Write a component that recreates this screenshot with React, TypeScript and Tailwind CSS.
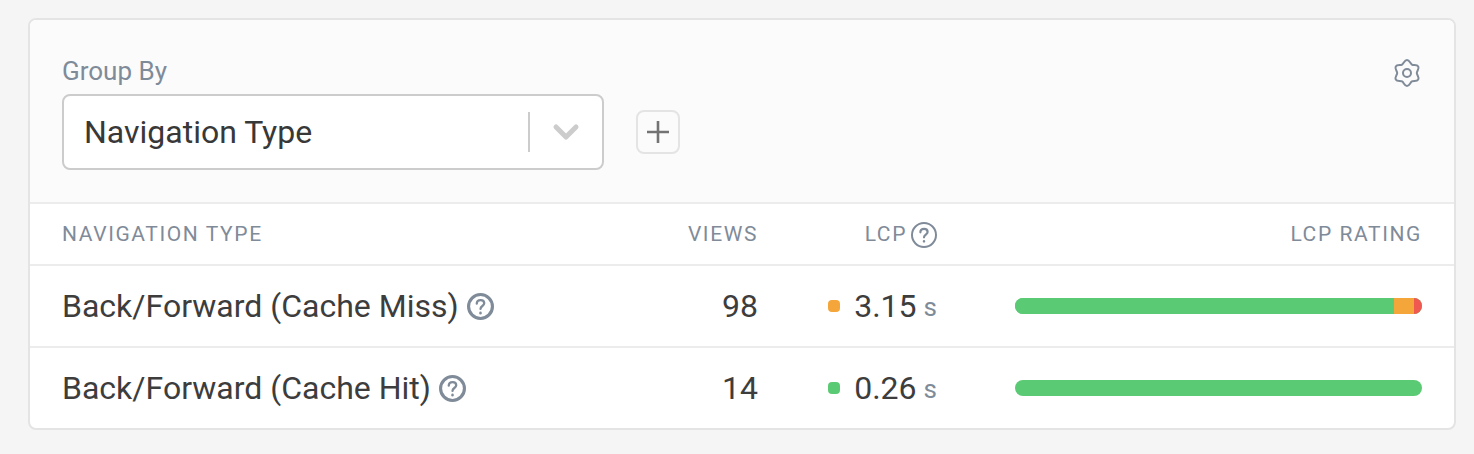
import { LuChevronDown } from 'react-icons/lu';

function HelpIcon({ className, stroke }: { className: string; stroke: number }) {
  return (
    <svg className={className} viewBox="0 0 26 26" fill="none" stroke="currentColor" strokeLinecap="round">
      <circle cx="13" cy="13" r={13 - stroke / 2} strokeWidth={stroke} />
      <path d="M9.4 10.300c0-2.100 1.600-3.500 3.700-3.500s3.500 1.300 3.500 3.100c0 2.600-3.600 2.700-3.600 5.400" strokeWidth="2.200" />
      <path d="M13 19.100v.3" strokeWidth="2.400" />
    </svg>
  );
}

// six soft lobes, tips at top/bottom, valleys left/right
function gearPath() {
  const pt = (r: number, deg: number) => {
    const a = (deg * Math.PI) / 180;
    return [14 + r * Math.cos(a), 14 + r * Math.sin(a)];
  };
  const handle = (r: number, deg: number, h: number) => {
    const [x, y] = pt(r, deg);
    const a = (deg * Math.PI) / 180;
    return [x - h * Math.sin(a), y + h * Math.cos(a)];
  };
  let d = `M${pt(13, -90).join(' ')}`;
  for (let i = 0; i < 12; i++) {
    const from = -90 + i * 30;
    const to = from + 30;
    const tip = i % 2 === 0;
    const [r1, r2, h1, h2] = tip ? [13, 9.8, 2.6, 2] : [9.8, 13, 2, 2.6];
    const c1 = handle(r1, from, h1);
    const c2 = handle(r2, to, -h2);
    d += `C${c1.join(' ')} ${c2.join(' ')} ${pt(r2, to).join(' ')}`;
  }
  return d + 'Z';
}

function GearIcon() {
  return (
    <svg className="h-7 w-7 text-[#7f8b99]" viewBox="0 0 28 28" fill="none" stroke="currentColor" strokeWidth="2">
      <path d={gearPath()} />
      <circle cx="14" cy="14" r="4" />
    </svg>
  );
}

function Row({ name, views, value, dot, bar }: { name: string; views: string; value: string; dot: string; bar: React.ReactNode }) {
  return (
    <div className="flex h-20 items-center px-[32px] text-[32px] text-[#3d3d3d]">
      <div className="flex flex-1 items-center gap-[8px]">
        <span>{name}</span>
        <HelpIcon className="h-[27px] w-[27px] text-[#7f8b99]" stroke={3} />
      </div>
      <div className="w-[120px] text-right">{views}</div>
      <div className="flex w-[179px] items-center justify-end">
        <span className={`mr-[14px] h-3 w-3 rounded-[4px] ${dot}`} />
        <span>{value}</span>
        <span className="ml-[7px] pt-[3px] text-[26px] text-[#7f8b99]">s</span>
      </div>
      <div className="ml-[78px] flex h-4 w-[407px] overflow-hidden rounded-full bg-[#5bca74]">{bar}</div>
    </div>
  );
}

export default function App() {
  return (
    <div className="h-[454px] w-[1474px] overflow-hidden bg-[#f5f5f5] pt-[18px] pl-[28px] font-['Roboto',sans-serif]">
      <div className="w-[1428px] overflow-hidden rounded-[8px] border-2 border-[#e4e4e4] bg-white">
        <div className="flex h-[182px] justify-between bg-[#fbfbfb] pt-[33px] px-[32px]">
          <div>
            <div className="text-[26px] leading-[36px] text-[#7f8b99]">Group By</div>
            <div className="mt-[5px] flex items-center">
              <div className="flex h-[76px] w-[542px] items-center rounded-[8px] border-2 border-[#cccccc] bg-white pl-[20px] text-[32px] text-[#383838]">
                <span className="flex-1">Navigation Type</span>
                <span className="h-[40px] w-[2px] bg-[#cccccc]" />
                <LuChevronDown className="mx-[16px] h-[40px] w-[40px] text-[#cccccc]" strokeWidth={3} />
              </div>
              <button className="ml-[32px] flex h-[44px] w-[44px] items-center justify-center rounded-[8px] border-2 border-[#e4e4e4] bg-[#fbfbfb]">
                <svg className="h-6 w-6 text-[#737373]" viewBox="0 0 24 24" fill="none" stroke="currentColor" strokeWidth="2.600">
                  <path d="M12 1v22M1 12h22" />
                </svg>
              </button>
            </div>
          </div>
          <div className="mt-[6px] mr-[1px]">
            <GearIcon />
          </div>
        </div>
        <div className="flex h-[64px] items-center border-t-2 border-b-2 border-[#ececec] px-[32px] pt-[1px] text-[21px] tracking-[1.6px] text-[#7f8b99]">
          <div className="flex-1">NAVIGATION TYPE</div>
          <div className="w-[120px] text-right">VIEWS</div>
          <div className="flex w-[179px] items-center justify-end gap-[4px]">
            LCP
            <HelpIcon className="h-[26px] w-[26px]" stroke={2} />
          </div>
          <div className="ml-[78px] w-[407px] text-right">LCP RATING</div>
        </div>
        <Row
          name="Back/Forward (Cache Miss)"
          views="98"
          value="3.15"
          dot="bg-[#f4a63a]"
          bar={
            <>
              <div className="w-[379px] bg-[#5bca74]" />
              <div className="w-[20px] bg-[#f4a63a]" />
              <div className="w-[8px] bg-[#f0594f]" />
            </>
          }
        />
        <div className="h-[2px] bg-[#ececec]" />
        <Row name="Back/Forward (Cache Hit)" views="14" value="0.26" dot="bg-[#5bca74]" bar={null} />
      </div>
    </div>
  );
}
